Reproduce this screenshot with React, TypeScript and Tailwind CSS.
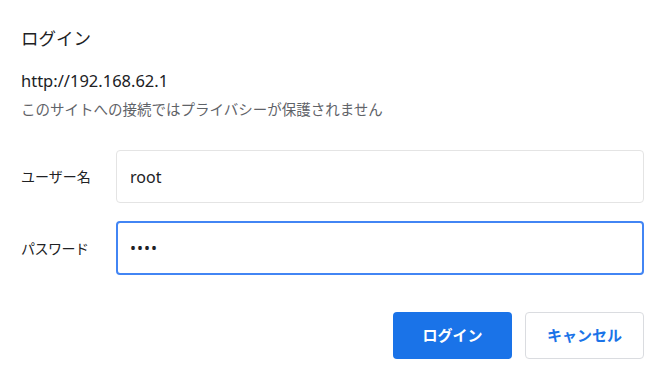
export default function App() {
  const font = {
    fontFamily: '"Noto Sans", "Noto Sans CJK JP", sans-serif',
  };
  return (
    <div
      className="w-[655px] h-[379px] bg-white pl-[21px] pr-[11px] pt-[24px] overflow-hidden"
      style={font}
    >
      <h1 className="text-[17.5px] leading-[28px] text-[#202124]">ログイン</h1>
      <p className="mt-[15px] text-[16.5px] leading-[28px] text-[#202124]">
        http://192.168.62.1
      </p>
      <p className="text-[14.5px] leading-[28px] text-[#5f6368]">
        このサイトへの接続ではプライバシーが保護されません
      </p>

      <div className="mt-[27px] flex flex-col gap-[18px]">
        <div className="flex items-center">
          <label className="w-[95px] text-[14px] text-[#202124]">ユーザー名</label>
          <div className="flex-1 h-[53px] rounded-[4px] border border-[#e4e4e4] flex items-center px-[13px] text-[16px] text-[#202124]">
            root
          </div>
        </div>
        <div className="flex items-center">
          <label className="w-[95px] text-[14px] text-[#202124] tracking-[-0.5px]">パスワード</label>
          <div className="flex-1 h-[54px] rounded-[4px] border-2 border-[#4285f4] flex items-center px-[12px] text-[16px] text-[#202124] tracking-[1px]">
            ••••
          </div>
        </div>
      </div>

      <div className="mt-[37px] flex justify-end gap-[13px]">
        <button className="w-[119px] h-[47px] rounded-[4px] bg-[#1a73e8] text-white text-[15px] font-semibold">
          ログイン
        </button>
        <button className="w-[119px] h-[47px] rounded-[4px] border border-[#dadce0] bg-white text-[#1a73e8] text-[15px] font-semibold">
          キャンセル
        </button>
      </div>
    </div>
  );
}
